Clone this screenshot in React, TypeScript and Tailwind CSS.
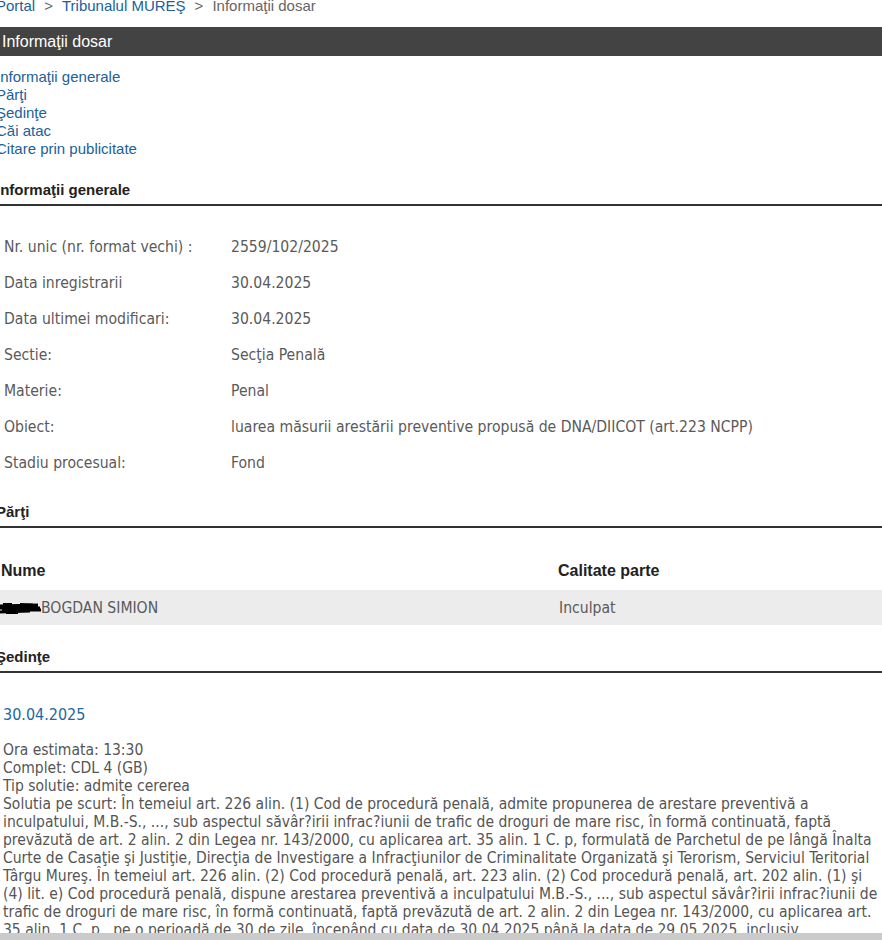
import React from 'react';

const tahoma = "font-['DejaVu_Sans_Condensed','DejaVu_Sans',sans-serif]";
const arial = "font-['Liberation_Sans',Arial,sans-serif]";

const info: [string, string][] = [
  ['Nr. unic (nr. format vechi) :', '2559/102/2025'],
  ['Data inregistrarii', '30.04.2025'],
  ['Data ultimei modificari:', '30.04.2025'],
  ['Sectie:', 'Secţia Penală'],
  ['Materie:', 'Penal'],
  ['Obiect:', 'luarea măsurii arestării preventive propusă de DNA/DIICOT (art.223 NCPP)'],
  ['Stadiu procesual:', 'Fond'],
];

const solutie = [
  'Solutia pe scurt: În temeiul art. 226 alin. (1) Cod de procedură penală, admite propunerea de arestare preventivă a',
  'inculpatului, M.B.-S., ..., sub aspectul săvâr?irii infrac?iunii de trafic de droguri de mare risc, în formă continuată, faptă',
  'prevăzută de art. 2 alin. 2 din Legea nr. 143/2000, cu aplicarea art. 35 alin. 1 C. p, formulată de Parchetul de pe lângă Înalta',
  'Curte de Casaţie şi Justiţie, Direcţia de Investigare a Infracţiunilor de Criminalitate Organizată şi Terorism, Serviciul Teritorial',
  'Târgu Mureş. În temeiul art. 226 alin. (2) Cod procedură penală, art. 223 alin. (2) Cod procedură penală, art. 202 alin. (1) şi',
  '(4) lit. e) Cod procedură penală, dispune arestarea preventivă a inculpatului M.B.-S., ..., sub aspectul săvâr?irii infrac?iunii de',
  'trafic de droguri de mare risc, în formă continuată, faptă prevăzută de art. 2 alin. 2 din Legea nr. 143/2000, cu aplicarea art.',
  '35 alin. 1 C. p., pe o perioadă de 30 de zile, începând cu data de 30.04.2025 până la data de 29.05.2025, inclusiv.',
];

const SectionTitle = ({ title, className }: { title: string; className: string }) => (
  <div className={`${className} border-b-2 border-[#333] pb-[5px]`}>
    <h2 className={`${arial} -ml-[4px] text-[15px] leading-[18px] font-bold text-[#222]`}>{title}</h2>
  </div>
);

export default function App() {
  return (
    <div className="min-h-screen bg-white overflow-hidden">
      {/* breadcrumb */}
      <div className={`${arial} -mt-[3px] -ml-[4px] h-[18px] text-[15px] leading-[18px] text-[#666] whitespace-nowrap`}>
        <a className="text-[#20619a]">Portal</a>
        <span className="mx-[9px]">&gt;</span>
        <a className="text-[#20619a]">Tribunalul MUREŞ</a>
        <span className="mx-[9px]">&gt;</span>
        <span>Informaţii dosar</span>
      </div>

      {/* title bar */}
      <div className={`${arial} mt-[12px] h-[29px] bg-[#434343] pl-[2px] flex items-center text-[16px] text-white`}>
        Informaţii dosar
      </div>

      {/* navigation */}
      <nav className={`${arial} mt-[12px] -ml-[4px] flex flex-col text-[15px] leading-[18px] text-[#20619a]`}>
        <a>Informaţii generale</a>
        <a>Părţi</a>
        <a>Şedinţe</a>
        <a>Căi atac</a>
        <a>Citare prin publicitate</a>
      </nav>

      {/* informatii generale */}
      <SectionTitle title="Informaţii generale" className="mt-[23px]" />
      <div className={`${tahoma} mt-[24px] pl-[4px] text-[15.6px] text-[#5a5a5a]`}>
        {info.map(([label, value]) => (
          <div key={label} className="grid grid-cols-[227px_1fr] h-[36px] items-center">
            <span>{label}</span>
            <span>{value}</span>
          </div>
        ))}
      </div>

      {/* parti */}
      <SectionTitle title="Părţi" className="mt-[21px]" />
      <div className="mt-[24px]">
        <div className={`${arial} grid grid-cols-[557px_1fr] h-[38px] items-center pl-[1px] text-[16px] font-bold text-[#222]`}>
          <span>Nume</span>
          <span>Calitate parte</span>
        </div>
        <div className={`${tahoma} grid grid-cols-[559px_1fr] h-[35px] items-center pt-[2px] bg-[#ececec] text-[15.6px] text-[#5a5a5a]`}>
          <span className="flex items-center whitespace-nowrap">
            <svg width="41" height="14" viewBox="0 0 41 14" className="shrink-0">
              <path d="M0 5 L38 4 M0 7 L40 7 M2 9 L41 9 M0 11 L30 10" stroke="#000" strokeWidth="3" fill="none" />
              <path d="M3 3 L12 3 M20 3 L33 3.5 M6 12 L18 12" stroke="#000" strokeWidth="2" fill="none" />
            </svg>
            BOGDAN SIMION
          </span>
          <span>Inculpat</span>
        </div>
      </div>

      {/* sedinte */}
      <SectionTitle title="Şedinţe" className="mt-[23px]" />
      <div className={`${tahoma} pl-[3px] text-[15.5px] text-[#555]`}>
        <div className="mt-[33px] text-[16px] leading-[18px] text-[#2467a0]">30.04.2025</div>
        <div className="mt-[17px] leading-[18px] whitespace-nowrap">
          <div>Ora estimata: 13:30</div>
          <div>Complet: CDL 4 (GB)</div>
          <div>Tip solutie: admite cererea</div>
          {solutie.map((line) => (
            <div key={line}>{line}</div>
          ))}
        </div>
      </div>

      <div className="fixed bottom-0 left-0 right-0 h-[7px] bg-[#cbcbcb]" />
    </div>
  );
}
